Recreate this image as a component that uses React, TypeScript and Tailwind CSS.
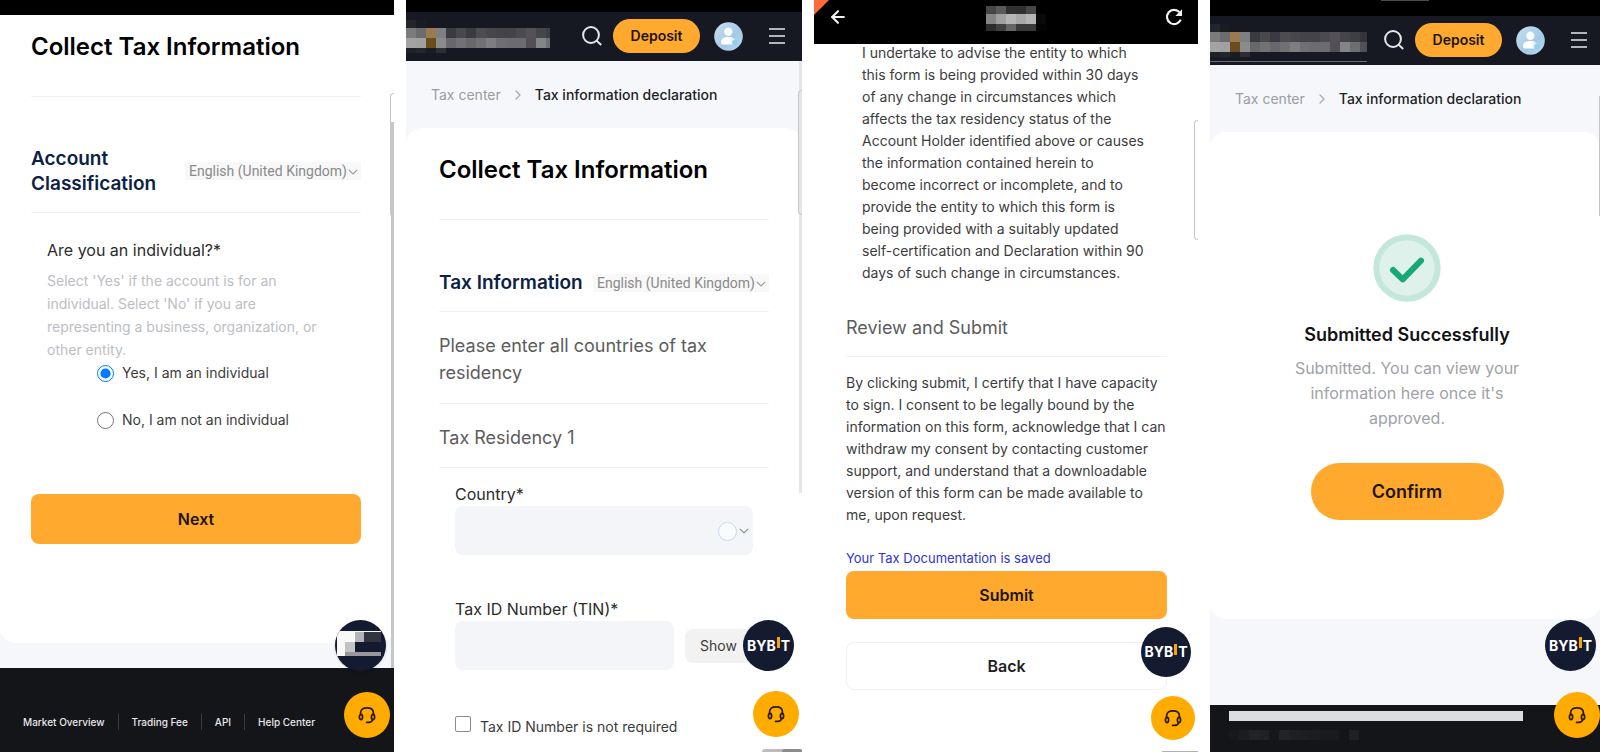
import React from "react";
import { ArrowLeft, ChevronRight } from "lucide-react";

function Mosaic({ rows, cell, rowHeights, label }: { rows: string[][]; cell: number; rowHeights: number[]; label: string }) {
  const width = rows[0].length * cell;
  const height = rowHeights.reduce((sum, h) => sum + h, 0);
  const tops = rowHeights.map((_, i) => rowHeights.slice(0, i).reduce((sum, h) => sum + h, 0));
  return (
    <svg width={width} height={height} viewBox={`0 0 ${width} ${height}`} role="img" aria-label={label} shapeRendering="crispEdges" className="block shrink-0">
      {rows.map((row, y) =>
        row.map((fill, x) => <rect key={`${x}-${y}`} x={x * cell} y={tops[y]} width={cell} height={rowHeights[y]} fill={fill} />),
      )}
    </svg>
  );
}

const LOGO_ROWS = [
  ["#23252b", "#1a1c24", "#171922", "#171922", "#171922", "#171922", "#171922", "#171922", "#171922", "#171922", "#171922", "#171922", "#171922", "#171922", "#171922", "#171922"],
  ["#7b7b7c", "#6c6c6e", "#9b7a52", "#7e7f82", "#3a3b42", "#48484d", "#3a3b42", "#4c4c51", "#47474c", "#434349", "#434349", "#4a4a4f", "#545258", "#45454b", "#3e3f45", "#34343a"],
  ["#a3a3a3", "#a0a0a0", "#6b4c1c", "#8a8b8d", "#68686c", "#727276", "#68686c", "#717175", "#7e7e80", "#6f6f73", "#6c6c70", "#6c6c70", "#525056", "#848587", "#6d6e72", "#505056"],
  ["#1f2128", "#23252b", "#1a1c24", "#2c2e34", "#171922", "#171922", "#171922", "#171922", "#171922", "#171922", "#171922", "#171922", "#171922", "#171922", "#171922", "#171922"],
];

const TITLE_ROWS = [
  ["#464646", "#5a5a5a", "#303030", "#303030", "#464646", "#000000"],
  ["#858585", "#a0a0a0", "#b5b5b5", "#a8a8a8", "#b5b5b5", "#0a0a0a"],
  ["#2c2c2c", "#414141", "#666666", "#3a3a3a", "#3a3a3a", "#050505"],
];

const FOOTER_ROWS = [
  ["#17181c", "#1b1d20", "#212326", "#1f2124", "#17181c", "#212326", "#1d1f22", "#1c1e21", "#1a1c1f", "#191a1e", "#191a1e", "#141519", "#1f2024"],
];

function SearchIcon() {
  return (
    <svg width="20" height="20" viewBox="0 0 20 20" fill="none" stroke="#e6e7e9" strokeWidth="2" aria-hidden="true">
      <circle cx="9" cy="9" r="7.9" />
      <path d="M14.6 14.6 19.2 19" />
    </svg>
  );
}

function Avatar() {
  return (
    <svg width="29" height="29" viewBox="0 0 29 29" role="img" aria-label="Account">
      <defs>
        <linearGradient id="avatar-bg" x1="0" y1="0" x2="1" y2="1">
          <stop offset="0" stopColor="#c9e0f0" />
          <stop offset="0.6" stopColor="#a3c9e4" />
          <stop offset="1" stopColor="#b9dcf0" />
        </linearGradient>
        <linearGradient id="avatar-body" x1="0" y1="0" x2="1" y2="0">
          <stop offset="0.5" stopColor="#ffffff" />
          <stop offset="1" stopColor="#cfe6f5" />
        </linearGradient>
      </defs>
      <circle cx="14.5" cy="14.5" r="14.3" fill="url(#avatar-bg)" />
      <circle cx="14.3" cy="9.8" r="4.2" fill="#f6fbfe" />
      <path d="M7 20.5c0-3.8 2.4-5.6 7.3-5.6s7.6 1.8 7.6 5.6c0 1.4-.9 2-2.2 2H9.2C7.8 22.5 7 21.9 7 20.5Z" fill="url(#avatar-body)" />
      <circle cx="21" cy="20.6" r="2.8" fill="#8fcfec" />
    </svg>
  );
}

function MenuIcon() {
  return (
    <svg width="16" height="16" viewBox="0 0 16 16" stroke="#e6e7e9" strokeWidth="1.5" aria-hidden="true">
      <path d="M0 1h16M0 8h16M0 15h16" />
    </svg>
  );
}

function DownIcon({ className }: { className: string }) {
  return (
    <svg width="10" height="6" viewBox="0 0 10 6" fill="none" stroke="currentColor" strokeWidth="1.2" aria-hidden="true" className={`pointer-events-none absolute ${className}`}>
      <path d="M0.8 0.8 5 5 9.2 0.8" />
    </svg>
  );
}

function SiteHeader({ className, logoClass }: { className: string; logoClass: string }) {
  return (
    <header className={`flex h-[49px] shrink-0 items-center bg-[#171922] pb-px ${className}`}>
      <div className={`overflow-hidden ${logoClass}`}>
        <Mosaic rows={LOGO_ROWS} cell={10} rowHeights={[8, 10, 10, 5]} label="Hidden logo" />
      </div>
      <button type="button" aria-label="Search" className="ml-auto"><SearchIcon /></button>
      <button type="button" className="ml-[11px] h-[34px] w-[87px] rounded-full bg-[#ffa92e] text-sm font-semibold text-[#1c1508]">Deposit</button>
      <button type="button" aria-label="Account" className="ml-[14px]"><Avatar /></button>
      <button type="button" aria-label="Menu" className="ml-[26px]"><MenuIcon /></button>
    </header>
  );
}

function Breadcrumb() {
  return (
    <nav aria-label="Breadcrumb" className="flex h-[67px] shrink-0 items-center px-[25px] text-sm">
      <a href="#tax-center" className="text-[#9a9ca3]">Tax center</a>
      <ChevronRight className="mx-[9px] size-4 text-[#a9abb1]" strokeWidth={2} aria-hidden="true" />
      <span aria-current="page" className="font-medium text-[#1d1f24]">Tax information declaration</span>
    </nav>
  );
}

function LanguageSelect() {
  return (
    <div className="relative shrink-0 font-[Roboto,sans-serif]">
      <select aria-label="Language" className="block h-[18px] w-44 appearance-none bg-[#f8f8f8] pl-1 text-sm leading-[18px] text-[#8a8a8a]">
        <option>English (United Kingdom)</option>
      </select>
      <DownIcon className="top-[7px] right-[3px] text-[#9a9a9a]" />
    </div>
  );
}

function SupportButton({ className }: { className: string }) {
  return (
    <button type="button" aria-label="Support" className={`absolute z-10 flex items-center justify-center rounded-full bg-[#ffab00] ${className}`}>
      <svg width="18" height="18" viewBox="0 0 18 18" fill="none" stroke="#2a1a00" strokeWidth="1.7" strokeLinecap="round" aria-hidden="true">
        <path d="M2.6 8.6V6.8C2.6 3.5 5 1.8 9 1.8s6.4 1.7 6.4 5v1.8" />
        <ellipse cx="3" cy="11" rx="1.6" ry="2.6" />
        <ellipse cx="15" cy="11" rx="1.6" ry="2.6" />
        <path d="M14.6 13.6c-.4 1.900-1.600 2.800-3.600 2.800H8.600" />
      </svg>
    </button>
  );
}

function BrandBadge({ className }: { className: string }) {
  return (
    <button type="button" aria-label="BYBIT" className={`absolute z-10 flex items-center justify-center rounded-full bg-[#141a30] text-sm font-bold text-white ${className}`}>
      <span>BYB</span>
      <span className="mx-px mb-[6px] h-[11px] w-[3px] bg-[#f7a600]" />
      <span>T</span>
    </button>
  );
}

function EdgeHandle({ className }: { className: string }) {
  return <div aria-hidden="true" className={`absolute right-0 z-10 rounded-l border border-r-0 border-[#c6c6c8] ${className}`} />;
}

const FOOTER_LINKS = ["Market Overview", "Trading Fee", "API", "Help Center"];

function ClassificationScreen() {
  return (
    <section className="relative flex flex-col overflow-hidden bg-[#f6f7fb]">
      <div className="h-[15px] shrink-0 bg-black" />
      <main className="rounded-b-2xl bg-white pt-4 pr-[33px] pb-[99px] pl-[31px]">
        <h1 className="border-b border-[#f2f2f2] pb-[33px] text-2xl leading-8 font-semibold text-black">Collect Tax Information</h1>
        <div className="flex items-center justify-between border-b border-[#f2f2f2] pt-[49px] pb-4">
          <h2 className="text-[19px] leading-[25px] font-semibold text-[#0c2244]">Account<br />Classification</h2>
          <LanguageSelect />
        </div>
        <div role="radiogroup" aria-labelledby="individual-question" className="px-4 pt-[25px]">
          <p id="individual-question" className="text-base leading-6 text-[#2b2b2b]">Are you an individual?*</p>
          <p className="mt-[7px] text-sm leading-[23px] text-[#bcbec3]">
            Select 'Yes' if the account is for an<br />individual. Select 'No' if you are<br />representing a business, organization, or<br />other entity.
          </p>
          <div className="flex flex-col gap-[23px] pl-[50px] text-sm leading-6 text-[#3c3c3c]">
            <label className="flex items-center gap-2">
              <input type="radio" name="individual" defaultChecked className="size-[17px] accent-[#007aff]" />
              Yes, I am an individual
            </label>
            <label className="flex items-center gap-2">
              <input type="radio" name="individual" className="size-[17px] accent-[#007aff]" />
              No, I am not an individual
            </label>
          </div>
        </div>
        <button type="button" className="mt-[62px] h-[50px] w-full rounded-lg bg-[#ffa92e] text-base font-semibold text-[#1c1508]">Next</button>
      </main>
      <footer className="mt-[25px] flex-1 bg-[#141519] px-[23px] pt-[46px] pb-[21px]">
        <nav aria-label="Footer" className="flex items-center text-[10px] leading-4 font-medium text-[#e8e8ea]">
          {FOOTER_LINKS.map((text, i) => (
            <a key={text} href="#footer" className={i === 0 ? "pr-[13px]" : "border-l border-[#3a3b40] px-[13px]"}>{text}</a>
          ))}
        </nav>
      </footer>
      <EdgeHandle className="top-[93px] h-[124px] w-1" />
      <div aria-hidden="true" className="absolute top-[122px] right-0 bottom-[84px] w-[3px] bg-[#c6c6c8]" />
      <div className="absolute right-2 bottom-[81px] z-10 flex size-[51px] items-center justify-center overflow-hidden rounded-full bg-[#141a30] shadow">
        <svg width="48" height="51" viewBox="0 0 48 51" role="img" aria-label="Hidden logo" shapeRendering="crispEdges">
          <path d="M0 11h44v25H0z" fill="#f8f8f8" />
          <path d="M18 12h9v10h-9z" fill="#b4b4b6" />
          <path d="M27 12h17v10H27z" fill="#32353f" />
          <path d="M8 22h10v10H8z" fill="#c2c3c5" />
          <path d="M18 22h26v10H18z" fill="#141a30" />
          <path d="M8 32h36v4H8z" fill="#9b969d" />
        </svg>
      </div>
      <SupportButton className="right-1 bottom-[14px] size-[46px]" />
    </section>
  );
}

function TaxInformationScreen() {
  return (
    <section className="relative flex flex-col overflow-hidden bg-[#f6f7fb]">
      <div className="h-3 shrink-0 bg-black" />
      <SiteHeader className="pr-[17px]" logoClass="w-36" />
      <Breadcrumb />
      <main className="flex-1 rounded-t-2xl bg-white pt-[26px] pr-[33px] pl-[33px]">
        <h1 className="border-b border-[#f2f2f2] pb-[33px] text-2xl leading-8 font-semibold text-black">Collect Tax Information</h1>
        <div className="flex items-center justify-between border-b border-[#f2f2f2] pt-[50px] pb-4">
          <h2 className="text-[19px] leading-[25px] font-semibold text-[#0c2244]">Tax Information</h2>
          <LanguageSelect />
        </div>
        <p className="border-b border-[#f2f2f2] pt-5 pb-[17px] text-lg leading-[27px] text-[#5c5c5c]">Please enter all countries of tax<br />residency</p>
        <h3 className="border-b border-[#f2f2f2] pt-5 pb-4 text-lg leading-[27px] text-[#5c5c5c]">Tax Residency 1</h3>
        <div className="px-4 pt-[14px]">
          <label htmlFor="country" className="block text-base leading-6 text-[#2b2b2b]">Country*</label>
          <div className="relative">
            <select id="country" className="block h-[49px] w-full appearance-none rounded-lg bg-[#f4f5f8]"><option /></select>
            <span aria-hidden="true" className="pointer-events-none absolute top-4 right-4 size-[19px] rounded-full border border-[#c3d9f7] bg-[#fbfcff]" />
            <DownIcon className="top-[22px] right-1 text-[#8e939c]" />
          </div>
          <label htmlFor="tin" className="mt-[42px] block text-base leading-6 text-[#2b2b2b]">Tax ID Number (TIN)*</label>
          <div className="flex items-center gap-[11px]">
            <input id="tin" type="text" className="h-[49px] min-w-0 flex-1 rounded-lg bg-[#f4f5f8] px-3" />
            <button type="button" className="h-[34px] w-[68px] rounded-lg bg-[#f2f2f2] pl-[15px] text-left text-sm text-[#3c3c3c]">Show</button>
          </div>
          <label className="mt-[45px] flex items-center gap-[9px] text-sm leading-6 text-[#3c3c3c]">
            <input type="checkbox" className="mt-px size-4 appearance-none self-start rounded-xs border border-[#8a8a8a] bg-white" />
            Tax ID Number is not required
          </label>
        </div>
      </main>
      <EdgeHandle className="top-[90px] h-[125px] w-1" />
      <div aria-hidden="true" className="absolute top-[61px] right-0 h-[432px] w-[3px] bg-[#e6e6e8]" />
      <BrandBadge className="right-2 bottom-[81px] size-[51px]" />
      <SupportButton className="right-[3px] bottom-[15px] size-[46px]" />
      <div aria-hidden="true" className="absolute right-0 bottom-0 flex h-[3px] w-10 justify-end rounded-tl-full bg-[#bdbdbd]">
        <span className="h-[3px] w-5 rounded-t-full bg-[#8c8c8c]" />
      </div>
    </section>
  );
}

function ReviewScreen() {
  return (
    <section className="relative flex flex-col overflow-hidden bg-white">
      <header className="relative z-10 flex h-11 shrink-0 items-start justify-between bg-black px-[14px] text-[#f2f2f2]">
        <svg width="15" height="15" viewBox="0 0 15 15" aria-hidden="true" className="absolute top-0 left-0"><path d="M0 0h15L0 15Z" fill="#ff6a3c" /></svg>
        <button type="button" aria-label="Go back" className="relative pt-[7px]"><ArrowLeft className="size-5" strokeWidth={2.5} /></button>
        <div className="pt-[6px] pl-5">
          <Mosaic rows={TITLE_ROWS} cell={10} rowHeights={[8, 10, 7]} label="Hidden title" />
        </div>
        <button type="button" aria-label="Reload" className="pt-[7px]">
          <svg width="20" height="20" viewBox="0 0 20 20" aria-hidden="true">
            <path d="M16.7 12.6a7.1 7.1 0 1 1-1.4-7.5" fill="none" stroke="#f2f2f2" strokeWidth="2.2" />
            <path d="M18 2.3V9h-6.700Z" fill="#f2f2f2" />
          </svg>
        </button>
      </header>
      <main className="-mt-0.5 flex-1 pr-[31px] pb-[62px] pl-8">
        <p className="pl-4 text-sm leading-[22px] text-[#3c3c3c]">
          I undertake to advise the entity to which<br />this form is being provided within 30 days<br />of any change in circumstances which<br />affects the tax residency status of the<br />Account Holder identified above or causes<br />the information contained herein to<br />become incorrect or incomplete, and to<br />provide the entity to which this form is<br />being provided with a suitably updated<br />self-certification and Declaration within 90<br />days of such change in circumstances.
        </p>
        <h2 className="mt-[30px] border-b border-[#f2f2f2] pb-[15px] text-lg leading-[27px] text-[#5c5c5c]">Review and Submit</h2>
        <p className="mt-[15px] text-sm leading-[22px] whitespace-nowrap text-[#3c3c3c]">
          By clicking submit, I certify that I have capacity<br />to sign. I consent to be legally bound by the<br />information on this form, acknowledge that I can<br />withdraw my consent by contacting customer<br />support, and understand that a downloadable<br />version of this form can be made available to<br />me, upon request.
        </p>
        <p className="mt-[22px] text-[13px] leading-5 text-[#2f35d0]">Your Tax Documentation is saved</p>
        <button type="button" className="mt-[3px] block h-12 w-full rounded-lg bg-[#ffa92e] text-base font-semibold text-[#1c1508]">Submit</button>
        <button type="button" className="mt-[23px] block h-12 w-full rounded-lg border border-[#efefef] bg-white text-base font-semibold text-[#1f1f1f]">Back</button>
      </main>
      <EdgeHandle className="top-[120px] h-[120px] w-1" />
      <BrandBadge className="right-[7px] bottom-[75px] size-[50px]" />
      <SupportButton className="right-[3px] bottom-3 size-11" />
      <div aria-hidden="true" className="absolute right-0 bottom-0 h-px w-9 bg-[#b0b0b0]" />
    </section>
  );
}

function SuccessScreen() {
  return (
    <section className="relative flex flex-col overflow-hidden bg-[#f6f7fb]">
      <div className="flex h-4 shrink-0 items-start justify-center bg-black"><span className="h-px w-12 bg-[#4a4a4a]" /></div>
      <SiteHeader className="pr-[13px]" logoClass="w-[157px]" />
      <Breadcrumb />
      <main className="flex flex-col items-center rounded-2xl bg-white pt-[102px] pb-[99px] pl-1 text-center">
        <svg width="68" height="68" viewBox="0 0 68 68" role="img" aria-label="Success">
          <circle cx="34" cy="34" r="33.7" fill="#c3e7da" />
          <circle cx="34" cy="34" r="27.7" fill="#def1ea" />
          <path d="M20 36l9.7 9.4L48 26.6" fill="none" stroke="#17a876" strokeWidth="6" strokeLinecap="round" strokeLinejoin="round" />
        </svg>
        <h1 className="mt-[19px] text-lg leading-7 font-semibold text-[#121214]">Submitted Successfully</h1>
        <p className="mt-[7px] text-base leading-[25px] text-[#a0a2a8]">Submitted. You can view your<br />information here once it's<br />approved.</p>
        <button type="button" className="mt-8 h-[57px] w-[193px] rounded-full bg-[#ffa92e] text-lg font-semibold text-[#1c1508]">Confirm</button>
      </main>
      <footer className="mt-[86px] flex-1 bg-[#141519] pt-[6px] pr-[77px] pb-3 pl-[19px]">
        <div className="h-[10px] bg-[#dcdde0]" />
        <div className="mt-[9px]"><Mosaic rows={FOOTER_ROWS} cell={10} rowHeights={[10]} label="Hidden links" /></div>
      </footer>
      <div aria-hidden="true" className="absolute top-[61px] left-0 h-px w-[157px] bg-[#6b6c72]" />
      <div aria-hidden="true" className="absolute top-24 right-0 h-[120px] w-px bg-[#c6c6c8]" />
      <BrandBadge className="right-1 bottom-[81px] size-[51px]" />
      <SupportButton className="right-0 bottom-[14px] size-[46px]" />
    </section>
  );
}

export default function App() {
  return (
    <div className="grid min-h-screen grid-cols-[394fr_396fr_384fr_390fr] gap-3 bg-white font-[Inter,sans-serif]">
      <ClassificationScreen />
      <TaxInformationScreen />
      <ReviewScreen />
      <SuccessScreen />
    </div>
  );
}
